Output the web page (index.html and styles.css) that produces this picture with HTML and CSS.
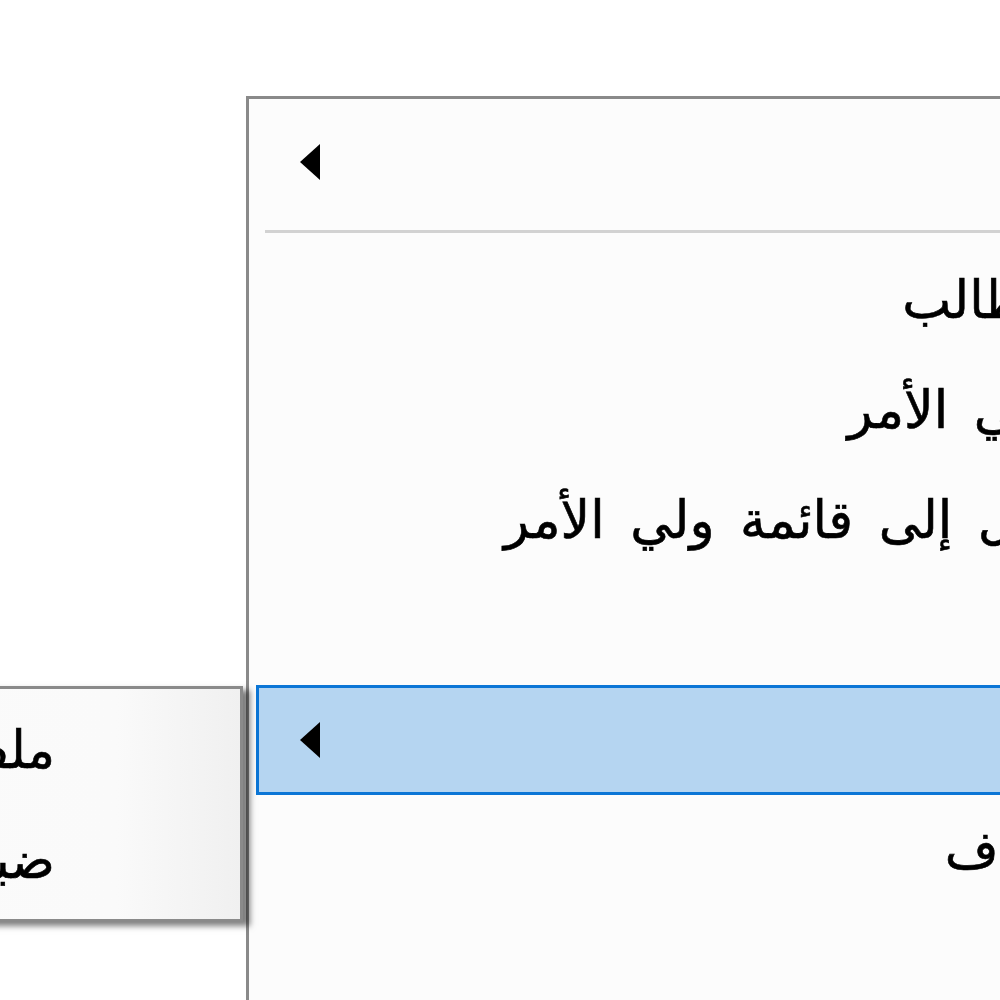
FILE: index.html
```html
<!DOCTYPE html>
<html lang="ar">
<head>
  <meta charset="UTF-8" />
  <title>قائمة</title>
  <link rel="stylesheet" href="styles.css">
</head>
<body>
  <div class="screen">
    <div class="menu">
      <div class="item"><span class="label"></span><span class="arrow"></span></div>
      <div class="sep"></div>
      <div class="item"><span class="label">الطالب</span></div>
      <div class="item"><span class="label">ولي الأمر</span></div>
      <div class="item"><span class="label">نقل إلى قائمة ولي الأمر</span></div>
      <div class="item"><span class="label"></span></div>
      <div class="item active"><span class="label"></span><span class="arrow"></span></div>
      <div class="item"><span class="label">حذف</span></div>
    </div>
    <div class="submenu">
      <div class="item"><span class="label">ملف الطالب</span></div>
      <div class="item"><span class="label">ضبط الإعدادات</span></div>
    </div>
  </div>
</body>
</html>
```

FILE: styles.css
```css
html, body { margin: 0; padding: 0; background: #fff; overflow: hidden; }
.screen { position: relative; width: 1000px; height: 1000px; overflow: hidden; box-sizing: border-box; padding: 96px 0 0 246px; font-family: "DejaVu Sans", sans-serif; font-size: 52px; word-spacing: 9px; color: #000; -webkit-text-stroke: 0.6px #000; }
.menu { width: 900px; height: 1000px; box-sizing: border-box; border: 3px solid #8a8a8a; background: #fcfcfc; padding: 8px 7px 0 7px; direction: rtl; }
.item { height: 110px; box-sizing: border-box; display: flex; align-items: center; padding: 0 78px 0 44px; white-space: nowrap; }
.item .label { line-height: 1; }
.item .arrow { margin-right: auto; width: 0; height: 0; border-top: 18px solid transparent; border-bottom: 18px solid transparent; border-right: 20px solid #000; }
.item.active { background: #b5d5f1; border: 3px solid #0c76d6; padding: 0 75px 0 41px; }
.sep { height: 3px; background: #d2d2d2; margin: 13px 0 12px 9px; }
.submenu { position: absolute; top: 686px; left: -257px; width: 500px; height: 236px; box-sizing: border-box; border: 3px solid #8a8a8a; padding: 6px 0 0 0; direction: rtl; background: linear-gradient(to right, #fbfbfb 0, #fafafa 370px, #f0f0f0 100%); box-shadow: 7px 4px 6px rgba(0, 0, 0, 0.5); }
.submenu .item { padding: 0 185px 0 0; }
```
